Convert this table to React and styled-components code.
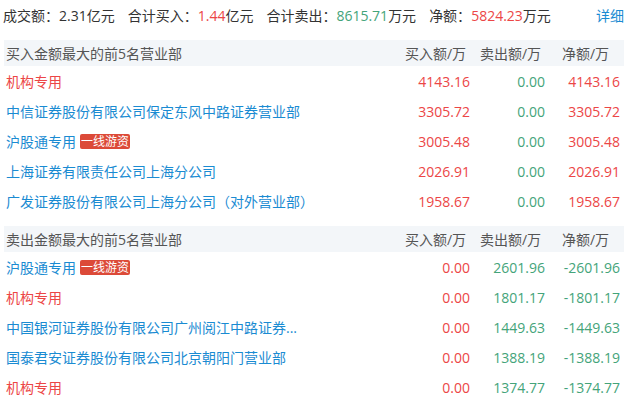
import React from "react";
import styled, { createGlobalStyle } from "styled-components";

const GlobalStyle = createGlobalStyle`
  html, body {
    margin: 0;
    padding: 0;
    background: #ffffff;
  }
  body {
    font-family: "Open Sans", "Noto Sans CJK SC", sans-serif;
    font-size: 14px;
    color: #333333;
  }
`;

const RED = "#ec4646";
const GREEN = "#44a47a";
const BLUE = "#1a8bd2";

// long names are cut to 20 characters, as the source list does
const shorten = (name) => (name.length > 22 ? name.slice(0, 20) + "..." : name);

const buyRows = [
  { name: "机构专用", org: true, buy: "4143.16", sell: "0.00", net: "4143.16" },
  { name: "中信证券股份有限公司保定东风中路证券营业部", buy: "3305.72", sell: "0.00", net: "3305.72" },
  { name: "沪股通专用", badge: "一线游资", buy: "3005.48", sell: "0.00", net: "3005.48" },
  { name: "上海证券有限责任公司上海分公司", buy: "2026.91", sell: "0.00", net: "2026.91" },
  { name: "广发证券股份有限公司上海分公司（对外营业部）", buy: "1958.67", sell: "0.00", net: "1958.67" },
];

const sellRows = [
  { name: "沪股通专用", badge: "一线游资", buy: "0.00", sell: "2601.96", net: "-2601.96" },
  { name: "机构专用", org: true, buy: "0.00", sell: "1801.17", net: "-1801.17" },
  { name: "中国银河证券股份有限公司广州阅江中路证券营业部", buy: "0.00", sell: "1449.63", net: "-1449.63" },
  { name: "国泰君安证券股份有限公司北京朝阳门营业部", buy: "0.00", sell: "1388.19", net: "-1388.19" },
  { name: "机构专用", org: true, buy: "0.00", sell: "1374.77", net: "-1374.77" },
];

function Section({ title, rows, side }) {
  return (
    <SectionBox>
      <HeadRow>
        <HeadTitle>{title}</HeadTitle>
        <HeadCell>买入额/万</HeadCell>
        <HeadCell>卖出额/万</HeadCell>
        <HeadCell>净额/万</HeadCell>
      </HeadRow>
      {rows.map((r, i) => (
        <Row key={i}>
          <NameCell>
            <Name $org={r.org} title={r.name}>
              {shorten(r.name)}
            </Name>
            {r.badge && <Badge>{r.badge}</Badge>}
          </NameCell>
          <NumCell $color={RED}>{r.buy}</NumCell>
          <NumCell $color={GREEN}>{r.sell}</NumCell>
          <NumCell $color={side === "buy" ? RED : GREEN}>{r.net}</NumCell>
        </Row>
      ))}
    </SectionBox>
  );
}

export default function App() {
  return (
    <>
      <GlobalStyle />
      <Page>
        <Summary>
          <Stats>
            <Stat>
              成交额：<Value>2.31</Value>亿元
            </Stat>
            <Stat>
              合计买入：<Value $color={RED}>1.44</Value>亿元
            </Stat>
            <Stat>
              合计卖出：<Value $color={GREEN}>8615.71</Value>万元
            </Stat>
            <Stat>
              净额：<Value $color={RED}>5824.23</Value>万元
            </Stat>
          </Stats>
          <DetailLink>详细</DetailLink>
        </Summary>
        <Section title="买入金额最大的前5名营业部" rows={buyRows} side="buy" />
        <Section title="卖出金额最大的前5名营业部" rows={sellRows} side="sell" />
      </Page>
    </>
  );
}

const Page = styled.div`
  width: 632px;
  height: 398px;
  overflow: hidden;
  box-sizing: border-box;
  padding: 0 8px 0 4px;
`;

const Summary = styled.div`
  height: 32px;
  display: flex;
  align-items: center;
  justify-content: space-between;
  margin-left: -1px;
  margin-bottom: 8px;
  line-height: 20px;
`;

const Stats = styled.div`
  display: flex;
  gap: 13px;
`;

const Stat = styled.span`
  color: #333333;
  white-space: nowrap;
`;

const Value = styled.span`
  color: ${(p) => p.$color || "#333333"};
`;

const DetailLink = styled.a`
  color: ${BLUE};
  cursor: pointer;
`;

const SectionBox = styled.div`
  margin-bottom: 10px;
`;

const gridCols = `
  display: grid;
  grid-template-columns: 1fr 75px 75px 75px;
  align-items: center;
  padding: 0 1px 0 2px;
`;

const HeadRow = styled.div`
  ${gridCols}
  height: 26px;
  background: #f3f6f9;
  color: #555555;
`;

const HeadTitle = styled.div`
  color: #555555;
`;

const HeadCell = styled.div`
  text-align: center;
  white-space: nowrap;
`;

const Row = styled.div`
  ${gridCols}
  height: 30px;
`;

const NameCell = styled.div`
  display: flex;
  align-items: center;
  gap: 4px;
  min-width: 0;
`;

const Name = styled.span`
  color: ${(p) => (p.$org ? RED : BLUE)};
  white-space: nowrap;
  cursor: pointer;
`;

const Badge = styled.span`
  display: inline-block;
  height: 15px;
  line-height: 15px;
  padding: 0 1px;
  font-size: 12px;
  color: #ffffff;
  background: #dc4a38;
  border-radius: 2px;
`;

const NumCell = styled.div`
  text-align: right;
  padding-right: 3px;
  color: ${(p) => p.$color};
`;
